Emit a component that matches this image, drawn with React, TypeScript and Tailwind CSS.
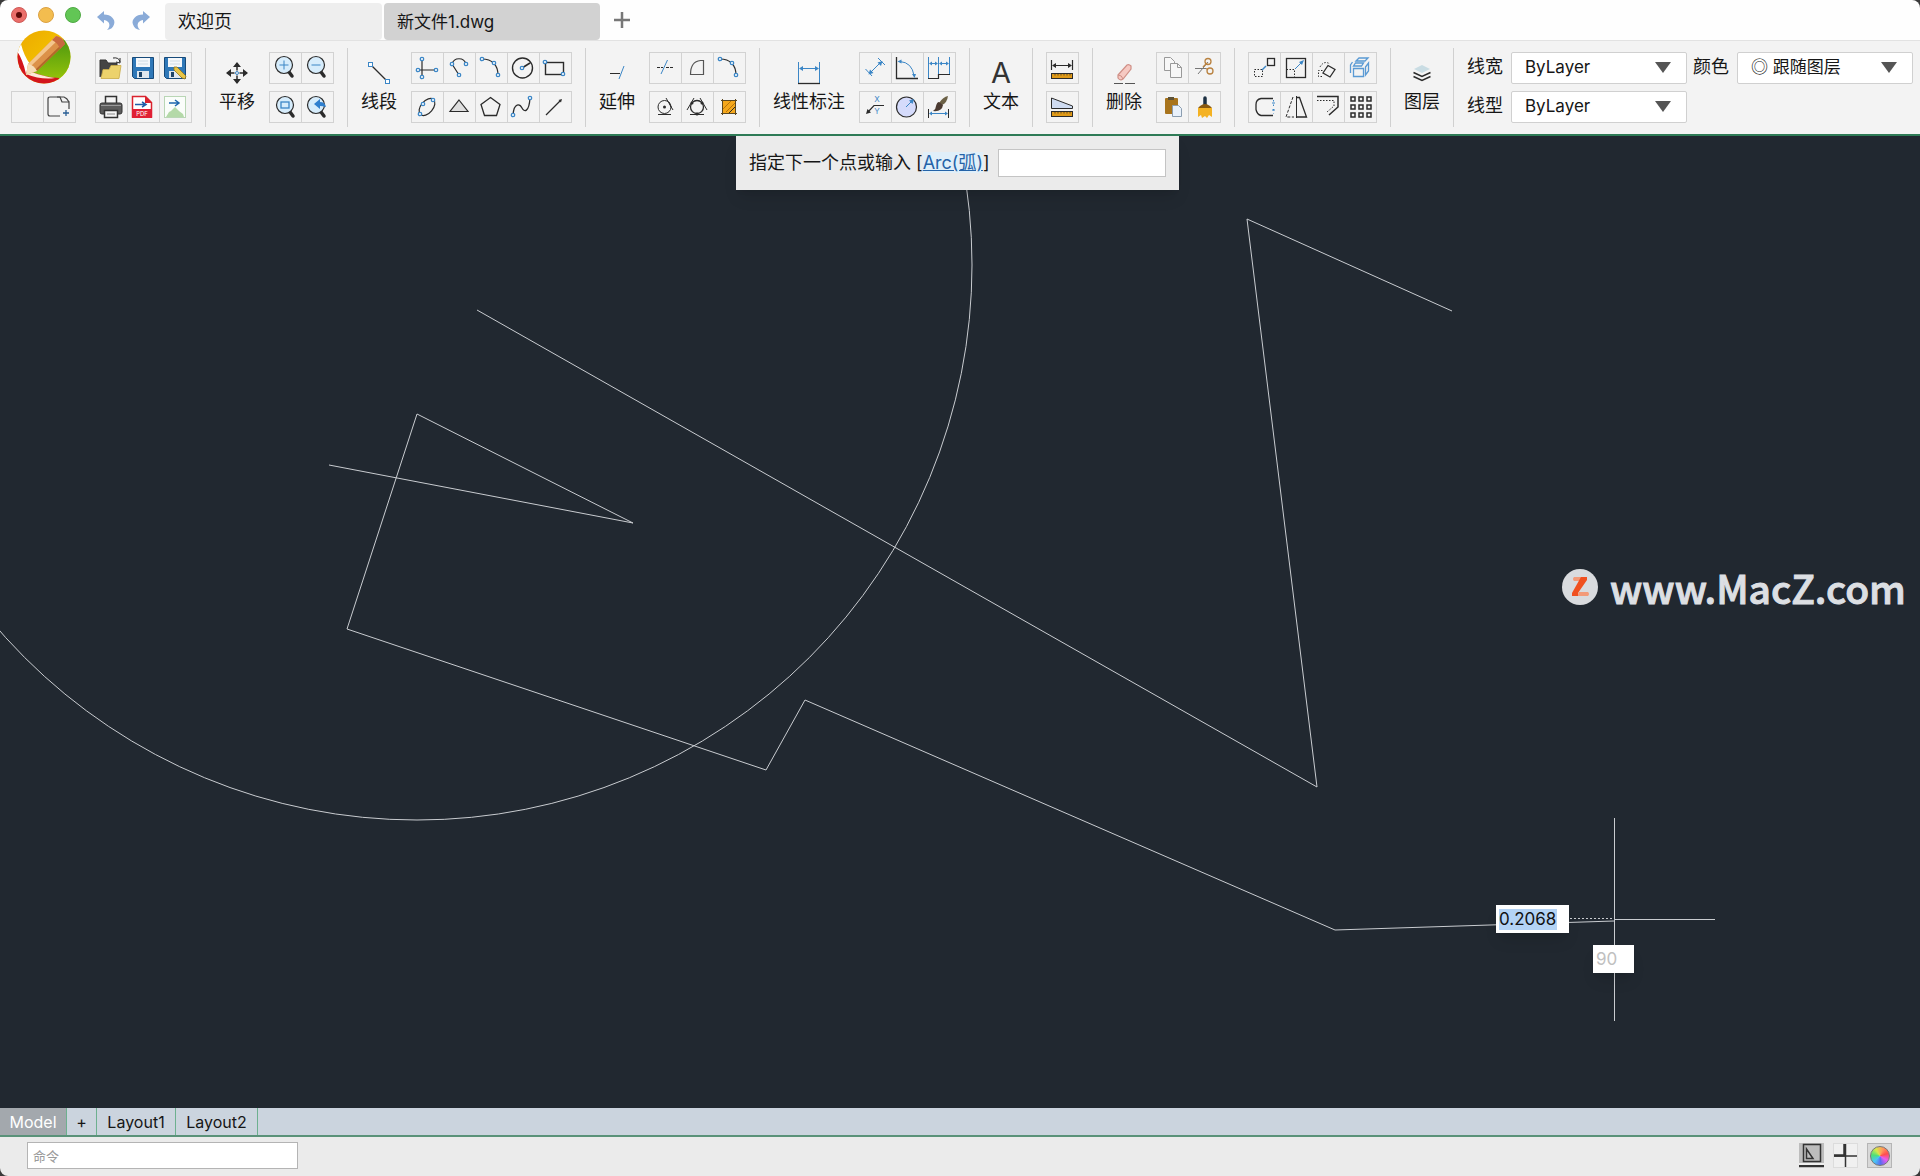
import type { ReactNode } from 'react';

const BLUE = '#3b86c6';
const INK = '#2b2b2b';

type Tool = { name: string; icon: ReactNode };

function Node({ x, y }: { x: number; y: number }) {
  return <circle cx={x} cy={y} r="1.7" fill="#fff" stroke={BLUE} strokeWidth="1.3" />;
}

function Ruler({ y }: { y: number }) {
  return (
    <>
      <rect x="4.5" y={y} width="21" height="5" fill="#e09a18" stroke={INK} />
      <path d={`M8 ${y}v2M11 ${y}v2M14 ${y}v2M17 ${y}v2M20 ${y}v2M23 ${y}v2`} stroke={INK} strokeWidth=".7" />
    </>
  );
}

function Lens({ x, y, children }: { x: number; y: number; children: ReactNode }) {
  return (
    <>
      <path d={`M${x + 5} ${y + 7}l3 4`} stroke={INK} strokeWidth="3.5" strokeLinecap="round" />
      <circle cx={x} cy={y} r="8.5" fill="#d6ecfb" stroke={INK} strokeWidth="1.2" />
      {children}
    </>
  );
}

function Floppy() {
  return (
    <>
      <path d="M4.500 4.500h21v21H6.500l-2-2z" fill="#2f78b8" stroke="#174a7a" />
      <path d="M8 5h14v9H8z" fill="#f5f8fb" />
      <path d="M10 8h10M10 11h10" stroke="#c8d4de" strokeWidth=".8" />
      <path d="M9 18h12v7H9z" fill="#dfe7ee" />
      <path d="M11 19h3v5h-3z" fill="#1d4468" />
    </>
  );
}

function ArcIcon() {
  return (
    <>
      <path d="M6 6c10 0 16 6 16 16" stroke={INK} strokeWidth="1.2" />
      <Node x={6} y={6} />
      <Node x={18} y={10} />
      <Node x={22} y={22} />
    </>
  );
}

const appTools: Tool[][] = [
  [
    { name: '空白', icon: null },
    {
      name: '新建',
      icon: (
        <>
          <path d="M16 24H6q-2 0-2-2V7q0-2 2-2h10l2 5h7v7" stroke="#444" strokeWidth="1.2" />
          <path d="M13 5h7q3 1 5 5" stroke="#444" strokeWidth="1.2" />
          <path d="M19 21h6M22 18v6" stroke="#2a5f95" strokeWidth="1.3" />
        </>
      ),
    },
  ],
];

const fileTools: Tool[][] = [
  [
    {
      name: '打开',
      icon: (
        <>
          <path d="M4 24V7h6l2 3h9v5" fill="#444" stroke="#333" />
          <path d="M5 25.500l2-9h6l2-4h10l-2 13z" fill="#ecd26c" stroke="#c9ab45" strokeWidth=".8" />
          <path d="M17 5q6-1 7 4M24 10V5M24 10l-4-1" stroke={INK} />
        </>
      ),
    },
    { name: '保存', icon: <Floppy /> },
    {
      name: '另存为',
      icon: (
        <>
          <Floppy />
          <path d="M14 14l3 0 9 9-1 3-3-1-8-8z" fill="#e8c546" stroke="#8f741c" strokeWidth=".8" />
        </>
      ),
    },
  ],
  [
    {
      name: '打印',
      icon: (
        <>
          <path d="M9.500 11V4.500h11V11" fill="#f5f5f5" stroke="#333" strokeWidth="1.500" />
          <rect x="4" y="11" width="22" height="11" rx="2" fill="#5c5c5c" stroke="#333" />
          <path d="M5 13.500h20" stroke="#9a9a9a" />
          <path d="M8.500 18.500h13v7h-13z" fill="#f5f5f5" stroke="#333" strokeWidth="1.500" />
          <path d="M11 22h8" stroke="#888" />
        </>
      ),
    },
    {
      name: '导出PDF',
      icon: (
        <>
          <path d="M4.500 4.500h13l6 6V25h-19z" fill="#fff" stroke="#d9232e" strokeWidth="1.500" />
          <path d="M17 4v7h7z" fill="#d9232e" />
          <path d="M4 17h20v9H4z" fill="#e01f34" />
          <path d="M7 12.500h10M14 10l4 2.500-4 2.500" stroke="#1f5fa8" strokeWidth="1.500" />
          <text x="14" y="24" fontSize="6" fill="#fff" textAnchor="middle">PDF</text>
        </>
      ),
    },
    {
      name: '导出图片',
      icon: (
        <>
          <rect x="4.500" y="4.500" width="21" height="21" fill="#fafdfa" stroke="#b9d6b5" />
          <path d="M6 25l3-5 2-1 4-4 4 4 4 3 1 3z" fill="#b4d9a8" />
          <path d="M9 11h9M15 8l4 3-4 3" stroke="#1f66ad" strokeWidth="1.500" />
        </>
      ),
    },
  ],
];

const zoomTools: Tool[][] = [
  [
    { name: '放大', icon: <Lens x={14} y={12}><path d="M9.500 12h9M14 7.500v9" stroke={BLUE} /></Lens> },
    { name: '缩小', icon: <Lens x={14} y={12}><path d="M9.500 12h9" stroke={BLUE} /></Lens> },
  ],
  [
    { name: '窗口缩放', icon: <Lens x={15} y={13}><rect x="11" y="10" width="8" height="6" stroke={BLUE} strokeWidth="1.300" /></Lens> },
    { name: '上一视图', icon: <Lens x={14} y={13}><path d="M12 12l6-5v3q5 0 6 5-3-1-6-1v3z" fill="#2f7fce" /></Lens> },
  ],
];

const drawTools: Tool[][] = [
  [
    {
      name: '构造线',
      icon: <><path d="M10 6v18M6 17h18" stroke={INK} strokeWidth="1.200" /><Node x={10} y={6} /><Node x={10} y={24} /><Node x={6} y={17} /><Node x={24} y={17} /></>,
    },
    {
      name: '多段线',
      icon: <><path d="M8 11c2-7 12-7 14 0M8 11l7 11" stroke={INK} strokeWidth="1.200" /><Node x={8} y={11} /><Node x={22} y={11} /><Node x={15} y={22} /></>,
    },
    { name: '圆弧', icon: <ArcIcon /> },
    { name: '圆', icon: <><circle cx="14.500" cy="15" r="10" stroke={INK} strokeWidth="1.400" /><path d="M14 15l8-5" stroke={INK} strokeWidth="1.500" /><Node x={14} y={15} /></> },
    { name: '矩形', icon: <><rect x="5.500" y="9.500" width="18" height="12" stroke={INK} strokeWidth="1.400" /><Node x={5} y={9} /><Node x={23} y={21} /></> },
  ],
  [
    {
      name: '椭圆',
      icon: <><ellipse cx="15" cy="15" rx="10" ry="6" transform="rotate(-50 15 15)" stroke={INK} strokeWidth="1.200" /><Node x={8} y={22} /><Node x={21} y={8} /><Node x={11} y={12} /></>,
    },
    { name: '三角形', icon: <path d="M15 8l9 11.500H6z" fill="#dedede" stroke={INK} strokeWidth="1.200" /> },
    { name: '多边形', icon: <path d="M14.500 5.500l9.500 7-3.500 11h-12L5 12.500z" stroke={INK} strokeWidth="1.300" /> },
    { name: '样条曲线', icon: <><path d="M5 23C6 10 12 12 14 16s7 5 8-10" stroke={INK} strokeWidth="1.300" /><Node x={5} y={23} /><Node x={22} y={6} /></> },
    { name: '射线', icon: <><path d="M6 23L20 9" stroke={INK} strokeWidth="1.200" /><path d="M22 7l-1 3.500-2.500-2.500z" fill={INK} /></> },
  ],
];

const modifyTools: Tool[][] = [
  [
    { name: '修剪', icon: <><path d="M7 14.500h6M16 14.500h7" stroke={INK} strokeDasharray="3 1" /><path d="M17.500 7L11 21" stroke={BLUE} /></> },
    { name: '倒角', icon: <path d="M8.500 21.500h13v-14h-3q-10 1-10 14z" stroke="#555" strokeWidth="1.200" /> },
    { name: '圆角', icon: <ArcIcon /> },
  ],
  [
    {
      name: '相切',
      icon: <><circle cx="14.500" cy="15" r="6.500" stroke={INK} /><circle cx="14.500" cy="15" r="1.500" fill={INK} /><path d="M8 22.500h13M16 6l7 12M19 10l2 5" stroke={INK} /></>,
    },
    {
      name: '三点相切',
      icon: (
        <>
          <circle cx="15" cy="15" r="6.500" stroke={INK} strokeWidth="1.300" />
          <path d="M8 22.500h14M12 6L5 18M18 6l7 12" stroke={INK} />
          <circle cx="10" cy="11" r="1.500" fill={INK} /><circle cx="20" cy="11" r="1.500" fill={INK} /><circle cx="15" cy="22" r="1.500" fill={INK} />
        </>
      ),
    },
    {
      name: '填充',
      icon: (
        <>
          <rect x="8" y="8" width="14" height="14" fill="#f5a81c" />
          <path d="M9 17l8-8M12 20l9-9" stroke="#b8740a" />
          <path d="M7 8.500h16M7 21.500h16M8.500 7v16M21.500 7v16" stroke="#5c4820" />
          <path d="M15 21l6-6" stroke={INK} />
        </>
      ),
    },
  ],
];

const dimensionTools: Tool[][] = [
  [
    { name: '对齐标注', icon: <><path d="M10 20L21 9M5.500 16l6.500 7M18 5l7 7" stroke={BLUE} /><path d="M8.500 21.500l1.500-5 3.500 3.500zM22.500 8l-5 1.500 3.500 3.500z" fill={BLUE} /></> },
    { name: '角度标注', icon: <><path d="M4.500 4v21.500H26" stroke={INK} strokeWidth="1.300" /><path d="M8 8.500q12 1 14 14" stroke={BLUE} /><path d="M5.500 8.500l4-2v4zM22.500 25l-2.500-4h4z" fill={BLUE} /></> },
    {
      name: '连续标注',
      icon: (
        <>
          <path d="M4.500 4v21M14.500 4v17M25.500 4v17M6 10.500h7M17 10.500h7" stroke={BLUE} />
          <path d="M5 10.500l3-2v4zM14 10.500l-3-2v4zM15 10.500l3-2v4zM25 10.500l-3-2v4z" fill={BLUE} />
          <path d="M4 25.500h10.500v-4H26" stroke={INK} strokeWidth="1.200" />
        </>
      ),
    },
  ],
  [
    {
      name: '引线',
      icon: (
        <>
          <path d="M8 20l6-6.500h10" stroke={INK} strokeWidth="1.200" />
          <path d="M6 22l1.500-5 3.500 3.500z" fill={INK} />
          <text x="17" y="10" fontSize="8" fill={BLUE} textAnchor="middle">X</text>
          <text x="17" y="22" fontSize="8" fill={BLUE} textAnchor="middle">Y</text>
        </>
      ),
    },
    { name: '半径标注', icon: <><circle cx="14.500" cy="15" r="10" fill="#d5dbfb" stroke={INK} strokeWidth="1.200" /><path d="M14 15l6-6" stroke={BLUE} /><path d="M22 7l-5 1.500 3.500 3.500z" fill={BLUE} /></> },
    {
      name: '标注样式',
      icon: (
        <>
          <path d="M4.500 17v9M24.500 17v9" stroke={INK} />
          <path d="M7 21.500h15" stroke={BLUE} /><path d="M5 21.500l3-2v4zM24 21.500l-3-2v4z" fill={BLUE} />
          <path d="M24 4q-1 7-6 9l-3-2q4-6 9-7z" fill="#6b6045" /><path d="M15 10l4 3q-1 7-10 6 3-2 3-5 1-4 3-4z" fill="#4b3a31" />
        </>
      ),
    },
  ],
];

const measureTools: Tool[][] = [
  [{ name: '测量距离', icon: <><path d="M4.500 7v10M25.500 7v10M6 12.500h18" stroke={INK} strokeWidth="1.200" /><path d="M5 12.500l4-2.500v5zM25 12.500l-4-2.500v5z" fill={INK} /><Ruler y={20.5} /></> }],
  [{ name: '测量面积', icon: <><path d="M4.500 6l21 8v2.500h-21z" fill="#cfdcf2" stroke={INK} /><Ruler y={19.5} /></> }],
];

const clipboardTools: Tool[][] = [
  [
    { name: '复制', icon: <><path d="M7.500 4.500h6l4 4v9h-10z" fill="#f7f7f7" stroke="#999" /><path d="M13.500 10.500h7l4 4v10h-11z" fill="#f7f7f7" stroke="#999" /><path d="M20.500 10.500v4h4" stroke="#999" /></> },
    { name: '剪切', icon: <><path d="M6 15.500h11M9 21L19 9" stroke="#777" /><circle cx="19" cy="8.500" r="3" stroke="#b98240" strokeWidth="1.300" /><circle cx="21" cy="18" r="3" stroke="#b98240" strokeWidth="1.300" /><path d="M17 15.500l2 1M14 14l4-4" stroke="#b98240" strokeWidth="1.300" /></> },
  ],
  [
    { name: '粘贴', icon: <><rect x="8" y="6" width="13" height="16" rx="1" fill="#a8741d" /><path d="M11 5h6v3h-6z" fill="#5d5238" /><path d="M15.500 13.500h6l3 3v8h-9z" fill="#e9f1fb" stroke="#8b9db0" /></> },
    { name: '格式刷', icon: <><path d="M16 6v7" stroke="#1d3042" strokeWidth="3.500" strokeLinecap="round" /><path d="M11 14q5-4 10 0l2 2H9z" fill="#8a5a10" /><path d="M9 16h14v9l-3-2-2 3-2-2-3 2-1-3-3 2z" fill="#f4b223" /></> },
  ],
];

const transformTools: Tool[][] = [
  [
    { name: '移动', icon: <><rect x="5.500" y="16.500" width="8" height="7" stroke={INK} strokeDasharray="1.500 1.500" /><path d="M13 17l4-4" stroke={BLUE} strokeWidth="1.500" /><rect x="18.500" y="5.500" width="7" height="7" stroke={INK} strokeWidth="1.300" /></> },
    { name: '缩放', icon: <><rect x="5.500" y="5.500" width="19" height="19" stroke={INK} strokeWidth="1.300" /><path d="M5.500 16.500h8v8" stroke={INK} strokeDasharray="1.500 1.500" /><path d="M14 16l7-7" stroke={BLUE} /><path d="M23 7l-5 2 3 3z" fill={BLUE} /></> },
    { name: '旋转', icon: <><path d="M9 23.500H5.500v-6H10M7 14q4-7 10-3" stroke={INK} strokeDasharray="1.500 1.500" /><path d="M15 12.500l7 4-5 7.500-7-4z" stroke={INK} strokeWidth="1.300" /></> },
    { name: '立体', icon: <path d="M8.500 15.500h10v8h-10zM8.500 13l2-3h8l-2 3zM20.500 14l3-4v8l-3 4zM11 8l3-3h9l-3 3zM5.500 20v-8l2-3" stroke="#5a9ad4" strokeWidth="1.300" /> },
  ],
  [
    { name: '闭合', icon: <><path d="M24 6.500H12q-5 1-5 6v5q1 5 5 6h12" stroke={INK} strokeWidth="1.300" /><path d="M24.500 8v14" stroke={BLUE} strokeDasharray="1.500 3" /><path d="M23 11h3M23 18h3" stroke={BLUE} /></> },
    { name: '镜像', icon: <><path d="M15.500 4v22" stroke={INK} /><path d="M15.500 5.500h3l7 19.500h-10" stroke={INK} strokeWidth="1.300" /><path d="M12 5L5 25h8" stroke={INK} strokeDasharray="3 1.500" /></> },
    { name: '偏移', icon: <><path d="M4 4.500h21V15l-9 8" stroke={INK} strokeWidth="1.500" /><path d="M4 8.500h17V14l-7 6" stroke={INK} strokeDasharray="1.500 1.500" /></> },
    {
      name: '阵列',
      icon: [5, 13, 21].map((y) => [6, 14, 22].map((x) => <rect key={`${x}-${y}`} x={x} y={y} width="4" height="4" stroke={INK} strokeWidth="1.500" />)),
    },
  ],
];

const panIcon = (
  <>
    <path d="M12 3v18M3 12h18" stroke={INK} strokeWidth="1.500" />
    <path d="M12 1l4 5H8zM12 23l4-5H8zM1 12l5-4v8zM23 12l-5-4v8z" fill={INK} />
    <rect x="9.500" y="9.500" width="5" height="5" fill="#f2f2f2" /><circle cx="12" cy="12" r="1.500" stroke={BLUE} />
  </>
);
const lineIcon = (
  <>
    <path d="M3 3l18 18" stroke={INK} strokeWidth="1.200" />
    <rect x="1.500" y="1.500" width="4" height="4" fill="#fff" stroke={BLUE} />
    <rect x="18.500" y="18.500" width="4" height="4" fill="#fff" stroke={BLUE} />
  </>
);
const extendIcon = (
  <>
    <path d="M5 12.500h10" stroke={INK} />
    <path d="M19 5l-5 13" stroke={BLUE} />
  </>
);
const linearIcon = (
  <>
    <path d="M1.500 1v21M22.500 1v21M4 7.500h16" stroke={BLUE} />
    <path d="M2 7.500l4-2.500v5zM22 7.500L18 5v5z" fill={BLUE} />
    <path d="M1 22.500h22" stroke={INK} strokeWidth="1.300" />
  </>
);
const eraseIcon = (
  <>
    <path d="M6 14l9-10q2-1 4 1v3l-8 10q-3 2-5-1z" fill="#f6c9c2" stroke="#cf8f86" strokeWidth="1.200" />
    <path d="M6 14q4 0 5 4" stroke="#cf8f86" />
    <path d="M2 22.500h9M13 22.500h10" stroke="#555" />
  </>
);
const layerIcon = (
  <>
    <path d="M12 4l8 4-8 4-8-4z" fill="#c9dce3" />
    <path d="M3.500 11.500l8.500 4 8.500-4M3.500 15.500l8.500 4 8.500-4" stroke={INK} strokeWidth="1.500" />
  </>
);

function ToolGrid({ rows }: { rows: Tool[][] }) {
  return (
    <div className="flex flex-col gap-[7px]">
      {rows.map((row, i) => (
        <div key={i} className="flex border-y border-r border-[#d2d2d2]">
          {row.map((tool) => (
            <button key={tool.name} type="button" aria-label={tool.name} className="flex h-[30px] w-8 items-center border-l border-[#d2d2d2]">
              <svg viewBox="0 0 30 30" fill="none" className="size-[30px]" aria-hidden="true">{tool.icon}</svg>
            </button>
          ))}
        </div>
      ))}
    </div>
  );
}

function BigTool({ label, icon }: { label: string; icon?: ReactNode }) {
  return (
    <button type="button" className="flex flex-col items-center gap-[5px] text-lg leading-6 whitespace-nowrap">
      {icon ? (
        <svg viewBox="0 0 24 24" fill="none" className="size-6" aria-hidden="true">{icon}</svg>
      ) : (
        <span className="text-[29px] leading-6 text-[#333]" aria-hidden="true">A</span>
      )}
      {label}
    </button>
  );
}

function Group({ children }: { children: ReactNode }) {
  return <div className="flex h-[79px] shrink-0 items-center gap-[14px] border-l border-[#d0d0d0] px-[13px]">{children}</div>;
}

function Picker({ id, label, value }: { id: string; label: string; value: string }) {
  return (
    <div className="flex gap-2">
      <label htmlFor={id} className="text-lg leading-[30px] whitespace-nowrap">{label}</label>
      <div className="relative">
        <select id={id} className="block h-8 w-44 appearance-none rounded-xs border border-[#d0d0d0] bg-white pl-[13px] text-[17px]">
          <option>{value}</option>
        </select>
        <svg viewBox="0 0 16 11" className="pointer-events-none absolute top-2.5 right-4 h-[11px] w-4" aria-hidden="true">
          <path d="M0 0h16L8 11z" fill="#555" />
        </svg>
      </div>
    </div>
  );
}

function TitleBar() {
  return (
    <header className="flex h-[41px] shrink-0 border-b border-[#e2e2e2] bg-[#fefefe]">
      <div className="flex w-[165px] shrink-0 pl-[11px]">
        <div className="flex gap-[11px] pt-[7px]">
          <button type="button" aria-label="关闭" className="flex size-4 items-center justify-center rounded-full border border-[#cf5a57] bg-[#ea6e6a]">
            <span className="size-1.5 rounded-full bg-[#5e0a08]" />
          </button>
          <button type="button" aria-label="最小化" className="size-4 rounded-full border border-[#dba143] bg-[#f3bd4f]" />
          <button type="button" aria-label="全屏" className="size-4 rounded-full border border-[#4fa944] bg-[#62c655]" />
        </div>
        <div className="flex gap-3 pt-[9px] pl-[15px]">
          <button type="button" aria-label="撤销" className="size-[22px]">
            <svg viewBox="0 0 22 22" aria-hidden="true"><path d="M1 8l7-6v3.500c7 0 12 5 10 10-1 3-3 5-7 5.500 4-4 3-9-3-10v3.500z" fill="#8aabd8" /></svg>
          </button>
          <button type="button" aria-label="重做" className="size-[22px]">
            <svg viewBox="0 0 22 22" aria-hidden="true"><path d="M20 8l-7-6v3.500c-7 0-12 5-10 10 1 3 3 5 7 5.500-4-4-3-9 3-10v3.500z" fill="#8aabd8" /></svg>
          </button>
        </div>
      </div>
      <nav className="flex gap-0.5 pt-[3px]" aria-label="文件">
        <button type="button" className="h-[37px] w-[217px] rounded bg-[#eeeeee] px-[13px] text-left text-lg leading-9">欢迎页</button>
        <button type="button" className="h-[37px] w-[216px] rounded bg-[#d2d2d2] px-[13px] text-left text-[17px] leading-9">新文件1.dwg</button>
      </nav>
      <button type="button" aria-label="新建标签" className="ml-[13px] h-10">
        <svg viewBox="0 0 18 18" className="size-[18px]" aria-hidden="true"><path d="M9 1v16M1 9h16" stroke="#777" strokeWidth="2.500" /></svg>
      </button>
    </header>
  );
}

function Logo() {
  return (
    <svg viewBox="0 0 54 54" className="-mt-[22px] size-[54px]" role="img" aria-label="CAD">
      <defs>
        <clipPath id="disc"><circle cx="27" cy="27" r="26.500" /></clipPath>
        <linearGradient id="yellow" x1="0" y1="0" x2="1" y2="1"><stop offset="0" stopColor="#eca800" /><stop offset="1" stopColor="#f8d400" /></linearGradient>
        <linearGradient id="green" x1="0" y1="0" x2="0" y2="1"><stop offset="0" stopColor="#3f8f10" /><stop offset="1" stopColor="#9cc80a" /></linearGradient>
      </defs>
      <g clipPath="url(#disc)">
        <path d="M0 0h54v54H0z" fill="url(#yellow)" />
        <path d="M54 2L14 42l40 12z" fill="url(#green)" />
        <path d="M0 18l10 22q16 7 32 8v6H0z" fill="#d3151c" />
        <path d="M4 14q3 12 9 20l-4 10Q6 30 0 21z" fill="#fff" />
        <path d="M15 42q10 4 23 6-14 2-29-4z" fill="#fbe9d8" />
        <path d="M39 6q7 1 9 8L20 41l-11 4 2-11z" fill="#dc9149" />
        <path d="M39 6L11 34l3 2 28-27z" fill="#f4c68c" />
        <path d="M46 13L18 40l2 1 28-27z" fill="#b3682a" />
        <path d="M11 34q6 1 9 7l-11 4z" fill="#f6dcb8" />
        <path d="M39 6q7 1 9 8l-5 5q-2-6-8-9z" fill="#c8683e" />
      </g>
    </svg>
  );
}

function Ribbon() {
  return (
    <div role="toolbar" className="flex h-[95px] shrink-0 border-b-2 border-[#2e7b56] bg-[#f3f3f3] pt-[7px]">
      <div className="flex h-20 shrink-0 gap-[19px] py-1 pr-[13px] pl-[11px]">
        <div className="flex flex-col items-center gap-[7px]">
          <Logo />
          <ToolGrid rows={appTools} />
        </div>
        <ToolGrid rows={fileTools} />
      </div>
      <Group><BigTool label="平移" icon={panIcon} /><ToolGrid rows={zoomTools} /></Group>
      <Group><BigTool label="线段" icon={lineIcon} /><ToolGrid rows={drawTools} /></Group>
      <Group><BigTool label="延伸" icon={extendIcon} /><ToolGrid rows={modifyTools} /></Group>
      <Group><BigTool label="线性标注" icon={linearIcon} /><ToolGrid rows={dimensionTools} /></Group>
      <Group><BigTool label="文本" /></Group>
      <Group><ToolGrid rows={measureTools} /></Group>
      <Group><BigTool label="删除" icon={eraseIcon} /><ToolGrid rows={clipboardTools} /></Group>
      <Group><ToolGrid rows={transformTools} /></Group>
      <Group><BigTool label="图层" icon={layerIcon} /></Group>
      <Group>
        <div className="grid grid-cols-[auto_auto] gap-x-1.5 gap-y-[7px]">
          <Picker id="line-width" label="线宽" value="ByLayer" />
          <Picker id="color" label="颜色" value="◎ 跟随图层" />
          <Picker id="line-type" label="线型" value="ByLayer" />
        </div>
      </Group>
    </div>
  );
}

function Drawing() {
  return (
    <main className="relative min-h-0 flex-1 overflow-hidden bg-[#212830]">
      <svg viewBox="0 136 1920 972" fill="none" stroke="#c9ccd0" className="size-full" role="img" aria-label="图纸">
        <circle cx="417" cy="265" r="555" />
        <path d="M477 310l840 477-70-568 205 92" />
        <path d="M329 465l304 58-216-109-70 215 419 141 39-70 530 230 279-9" />
        <path d="M1614.500 818v203M1614 919.500h101" />
        <path d="M1570 918.500h44" strokeDasharray="2 2" />
      </svg>

      {/* command prompt */}
      <form className="absolute top-0 left-[736px] flex h-[54px] items-center gap-2 bg-[#ebebeb] px-[13px] text-lg shadow-lg">
        <label htmlFor="prompt" className="whitespace-nowrap">
          指定下一个点或输入 [<a href="#arc" className="bg-[#e0eff9] text-[#2563a8] underline">Arc(弧)</a>]
        </label>
        <input id="prompt" className="h-7 w-[168px] border border-[#c4c4c4] bg-white px-1" />
      </form>

      <div className="absolute top-[769px] left-[1496px] flex h-7 w-[73px] items-center bg-white px-[3px] shadow-lg">
        <input aria-label="长度" defaultValue="0.2068" className="h-[21px] w-[58px] bg-[#b3d3f5] text-[17px] leading-5 text-[#111]" />
      </div>
      <input aria-label="角度" defaultValue="90" className="absolute top-[809px] left-[1593px] h-7 w-[41px] bg-white px-[3px] text-[17px] text-[#c0c0c0] shadow-lg" />

      <div className="absolute top-[424px] left-[1562px] flex items-center gap-3 text-[#dcdfe3]">
        <svg viewBox="0 0 36 36" className="size-9" aria-hidden="true">
          <circle cx="18" cy="18" r="18" fill="#d9dbde" />
          <path d="M12 8h10l-2 4h-8q-2-2 0-4zM17 23h9q2 2 0 4H15z" fill="#f39a78" />
          <path d="M19 8h6v3L16 24v3h-6v-3z" fill="#f0501f" />
        </svg>
        <span className="font-['Noto_Sans_CJK_SC',sans-serif] text-[39px] leading-[54px] font-medium [-webkit-text-stroke:1px_#dcdfe3]">www.MacZ.com</span>
      </div>
    </main>
  );
}

function LayoutTabs() {
  return (
    <nav className="flex h-[29px] shrink-0 border-b-2 border-[#5a9279] bg-[#cbd4de] text-base leading-[26px]" aria-label="布局">
      <button type="button" className="w-[67px] border-r border-[#6db08f] bg-[#a3a8ad] text-white">Model</button>
      <button type="button" aria-label="新建布局" className="w-[30px] border-r border-[#6db08f]">+</button>
      <button type="button" className="w-[79px] border-r border-[#6db08f]">Layout1</button>
      <button type="button" className="w-[82px] border-r border-[#6db08f]">Layout2</button>
    </nav>
  );
}

function StatusBar() {
  return (
    <footer className="flex h-[39px] shrink-0 items-center justify-between bg-[#ebebeb] pr-7 pb-0.5 pl-[27px]">
      <input aria-label="命令" placeholder="命令" className="h-[27px] w-[271px] border border-[#b4b4b4] bg-white px-[5px] text-[13px] placeholder:text-[#9a9a9a]" />
      <div className="flex gap-[9px]">
        <button type="button" aria-label="正交" className="size-[25px] bg-[#bdbdbd]">
          <svg viewBox="0 0 25 25" fill="none" stroke="#333" aria-hidden="true">
            <path d="M4.500 1.500h17v17h-17zM7.500 6v9.500H14z" strokeWidth="1.500" />
            <path d="M0 21h25" stroke="#eee" strokeWidth="2" /><path d="M0 23h25" strokeWidth="2" />
          </svg>
        </button>
        <button type="button" aria-label="十字光标" className="size-[25px] border border-[#dcdcdc] bg-[#f0f0f0]">
          <svg viewBox="0 0 23 23" fill="none" stroke="#333" aria-hidden="true">
            <path d="M11.500 0v23M0 12h23" strokeWidth="1.500" /><path d="M10.500 0v11.500H0" strokeWidth="2.500" />
          </svg>
        </button>
        <button type="button" aria-label="颜色" className="flex size-[25px] items-center justify-center border border-[#b5b5b5] bg-[#d8d8d8]">
          <span className="size-5 rounded-full border border-[#777] bg-[conic-gradient(from_20deg,#ff9a5c,#ff4d4d,#e85cf0,#5b6cf0,#4cc4f5,#4de07a,#d8e84a,#ff9a5c)]" />
        </button>
      </div>
    </footer>
  );
}

export default function App() {
  return (
    <div className="h-screen bg-[#3a3a3a] font-[Inter,'Noto_Sans_CJK_SC',sans-serif] text-[#161616]">
      <div className="flex h-full flex-col overflow-hidden rounded-lg">
        <TitleBar />
        <Ribbon />
        <Drawing />
        <LayoutTabs />
        <StatusBar />
      </div>
    </div>
  );
}
